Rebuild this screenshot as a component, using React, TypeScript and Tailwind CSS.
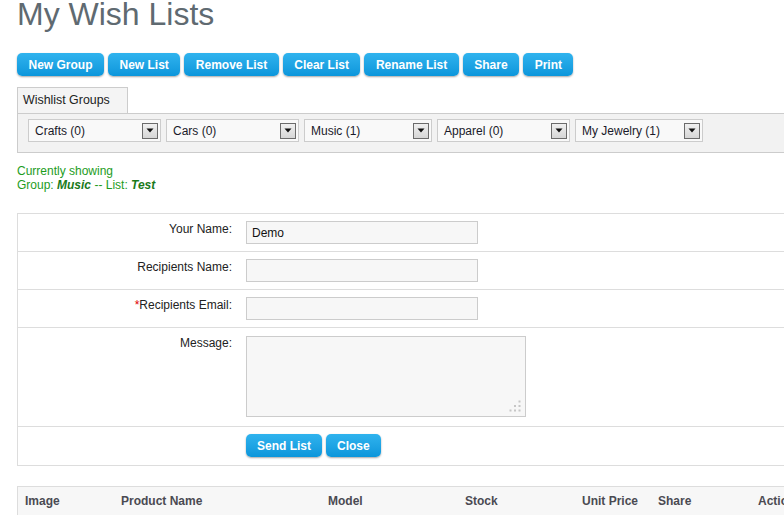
import React from "react";

const btn =
  "h-[23px] rounded-[5px] text-[12px] font-bold text-white bg-gradient-to-b from-[#2fb3ee] to-[#0a96db] shadow-[0_1px_2px_rgba(0,0,0,0.35)] flex items-center justify-center leading-none";

function Select({ label, w }: { label: string; w: string }) {
  return (
    <div
      className={`${w} h-[23px] border border-[#cccccc] bg-[#f9f9f9] flex items-center justify-between pl-[6px] pr-[2px] text-[12px] text-[#1a1a2a]`}
    >
      <span>{label}</span>
      <div className="w-[16px] h-[16px] border border-[#6b6b6b] bg-gradient-to-b from-[#f0f0f0] to-[#d6d6d6] flex items-center justify-center">
        <svg width="8" height="5" viewBox="0 0 8 5">
          <path d="M0.5 0.5 L7.5 0.5 L4 4.5 Z" fill="#111" />
        </svg>
      </div>
    </div>
  );
}

function Row({
  label,
  required,
  children,
}: {
  label: string;
  required?: boolean;
  children: React.ReactNode;
}) {
  return (
    <div className="flex items-start border-b border-[#dddddd]">
      <div className="w-[214px] text-right pt-[8px] text-[12px] leading-[15px] text-[#222]">
        {required && <span className="text-[#e00000]">*</span>}
        {label}
      </div>
      <div className="ml-[14px]">{children}</div>
    </div>
  );
}

export default function App() {
  return (
    <div className="w-[784px] h-[515px] overflow-hidden bg-white font-['Liberation_Sans',Arial,sans-serif]">
      <div className="pl-[17px] w-[820px]">
        <h1 className="text-[32px] leading-[32px] mt-[-2px] text-[#5f6a71] font-normal">
          My Wish Lists
        </h1>

        <div className="flex gap-[4px] mt-[23px]">
          {["New Group", "New List", "Remove List", "Clear List", "Rename List", "Share", "Print"].map(
            (t) => (
              <button key={t} className={`${btn} px-[11.5px]`}>
                {t}
              </button>
            )
          )}
        </div>

        <div className="mt-[11px] w-[111px] h-[26px] border border-b-0 border-[#cccccc] bg-[#f4f4f4] pl-[5px] pt-[5px] text-[12.4px] leading-[15px] text-[#222]">
          Wishlist Groups
        </div>
        <div className="border-t border-b border-l border-[#cccccc] bg-[#f2f2f2] pl-[10px] pt-[5px] pb-[10px] flex gap-[5px]">
          <Select label="Crafts (0)" w="w-[133px]" />
          <Select label="Cars (0)" w="w-[133px]" />
          <Select label="Music (1)" w="w-[128px]" />
          <Select label="Apparel (0)" w="w-[133px]" />
          <Select label="My Jewelry (1)" w="w-[128px]" />
        </div>

        <div className="mt-[11px] text-[12px] leading-[14px] text-[#1d9c1d]">
          <div>Currently showing</div>
          <div>
            Group: <b className="italic text-[#1a7a1a]">Music</b> -- List:{" "}
            <b className="italic text-[#1a7a1a]">Test</b>
          </div>
        </div>

        <div className="mt-[21px] border-t border-l border-[#dddddd]">
          <Row label="Your Name:">
            <div className="my-[7px] w-[232px] h-[23px] border border-[#cccccc] bg-[#f7f7f7] pl-[5px] flex items-center text-[12px] text-[#111]">
              Demo
            </div>
          </Row>
          <Row label="Recipients Name:">
            <div className="my-[7px] w-[232px] h-[23px] border border-[#cccccc] bg-[#f7f7f7]" />
          </Row>
          <Row label="Recipients Email:" required>
            <div className="my-[7px] w-[232px] h-[23px] border border-[#cccccc] bg-[#f7f7f7]" />
          </Row>
          <Row label="Message:">
            <div className="relative mt-[8px] mb-[9px] w-[280px] h-[81px] border border-[#cccccc] bg-[#f7f7f7]">
              <svg
                className="absolute right-[4px] bottom-[4px]"
                width="12"
                height="12"
                viewBox="0 0 12 12"
              >
                <rect x="9.5" y="0.5" width="2" height="2" fill="#c6c6c6" />
                <rect x="5" y="5" width="2" height="2" fill="#c6c6c6" />
                <rect x="9.5" y="5" width="2" height="2" fill="#c6c6c6" />
                <rect x="0.5" y="9.5" width="2" height="2" fill="#c6c6c6" />
                <rect x="5" y="9.5" width="2" height="2" fill="#c6c6c6" />
                <rect x="9.5" y="9.5" width="2" height="2" fill="#c6c6c6" />
              </svg>
            </div>
          </Row>
          <div className="flex border-b border-[#dddddd]">
            <div className="w-[214px]" />
            <div className="ml-[14px] flex gap-[4px] mt-[7px] mb-[8px]">
              <button className={`${btn} px-[11px]`}>Send List</button>
              <button className={`${btn} px-[11px]`}>Close</button>
            </div>
          </div>
        </div>

        <div className="mt-[20px] border-t border-l border-[#dddddd] bg-[#f7f7f7] h-[40px] flex text-[12px] leading-[15px] font-bold text-[#4a4a52] pt-[7px]">
          <div className="w-[96px] pl-[7px]">Image</div>
          <div className="w-[207px] pl-[7px]">Product Name</div>
          <div className="w-[137px] pl-[7px]">Model</div>
          <div className="w-[117px] pl-[7px]">Stock</div>
          <div className="w-[76px] pl-[7px]">Unit Price</div>
          <div className="w-[100px] pl-[7px]">Share</div>
          <div className="pl-[7px]">Action</div>
        </div>
      </div>
    </div>
  );
}
